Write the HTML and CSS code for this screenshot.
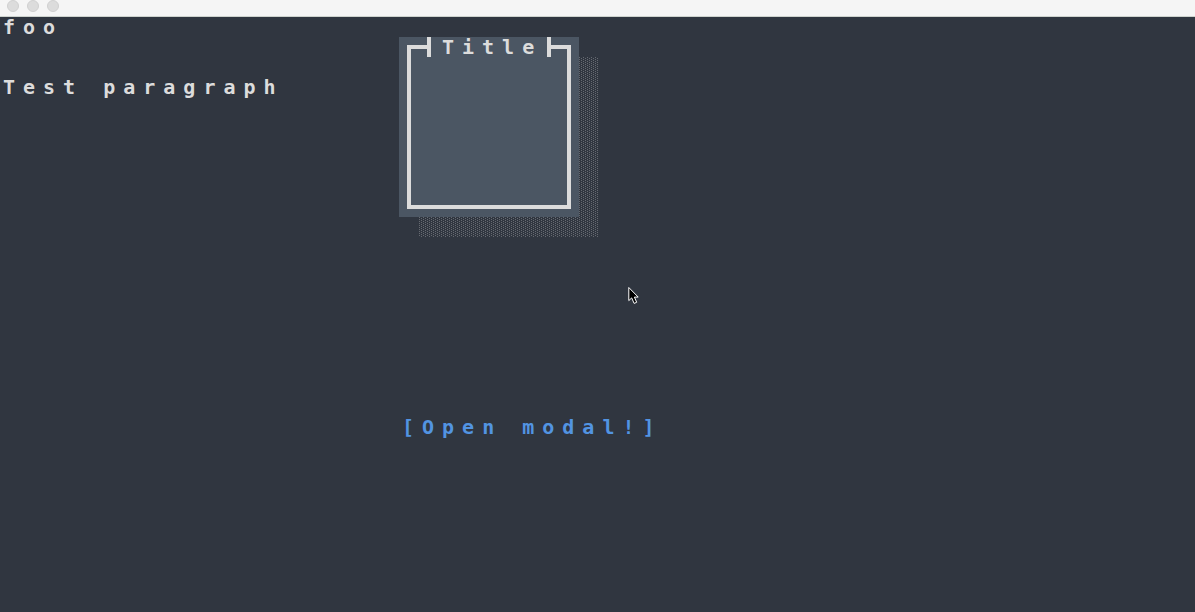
FILE: index.html
```html
<!DOCTYPE html>
<html lang="en">
<head>
<meta charset="utf-8">
<title>Terminal window</title>
<link rel="stylesheet" href="styles.css">
</head>
<body>
<header class="titlebar">
  <span class="light"></span>
  <span class="light"></span>
  <span class="light"></span>
</header>
<main class="screen">
  <section class="column">
    <p class="line">foo</p>
    <p class="line">Test paragraph</p>
  </section>
  <section class="column column-main">
    <div class="panel">
      <fieldset class="frame">
        <legend class="frame-title">Title</legend>
      </fieldset>
    </div>
    <button class="open" type="button">[Open modal!]</button>
  </section>
</main>
<svg class="pointer" width="12" height="20" viewBox="0 0 12 20" aria-hidden="true">
  <path d="M.8 1.5V14.6l2.9-2.7 2.4 5.5 2.6-1.1-2.3-5.2h3.8z" fill="#000" stroke="#fff" stroke-width="1"/>
</svg>
</body>
</html>
```
FILE: styles.css
```css
* {
  box-sizing: border-box;
}

body {
  margin: 0;
  min-height: 100vh;
  display: flex;
  flex-direction: column;
  background: #303640;
  color: #dcdcdc;
  font: bold 20px/20px "DejaVu Sans Mono", monospace;
  letter-spacing: 8px;
}

.titlebar {
  display: flex;
  gap: 8px;
  height: 17px;
  padding-left: 7px;
  background: #f5f5f5;
  border-bottom: 1px solid #ced3ce;
}

.light {
  width: 12px;
  height: 12px;
  border: 1px solid #d0d0d0;
  border-radius: 50%;
  background: #dcdcdc;
}

.screen {
  flex: 1;
  display: grid;
  grid-template-columns: 399px 1fr;
}

.column {
  display: flex;
  flex-direction: column;
  align-items: flex-start;
  gap: 40px;
}

.column-main {
  padding-top: 20px;
  gap: 200px;
}

.line {
  margin: 0;
  padding-left: 3px;
}

.panel {
  position: relative;
  width: 180px;
  padding: 0 8px 8px;
  background: #4b5663;
}

/* Light-shade dither, one cell down and right of the panel */
.panel::before {
  content: "";
  position: absolute;
  z-index: -1;
  top: 20px;
  left: 20px;
  width: 179px;
  height: 180px;
  background:
    conic-gradient(at 1px 1px, transparent 75%, #666a71 0) 0 0 / 4px 2px,
    conic-gradient(at 1px 1px, transparent 75%, #666a71 0) 2px 1px / 4px 2px;
}

.frame {
  height: 172px;
  margin: 0;
  padding: 0 16px;
  border: 4px solid #dcdcdc;
}

.frame-title {
  padding: 0 5px 0 11px;
  border: solid #dcdcdc;
  border-width: 0 4px;
}

.open {
  padding: 0 0 0 3px;
  border: 0;
  background: none;
  color: #5294e2;
  font: inherit;
  letter-spacing: inherit;
  cursor: pointer;
}

/* Mouse pointer floating over the screen */
.pointer {
  position: absolute;
  top: 286px;
  left: 628px;
}
```
